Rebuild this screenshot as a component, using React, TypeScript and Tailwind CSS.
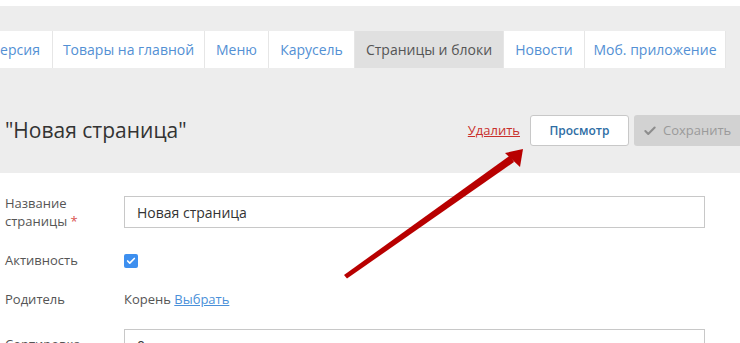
import { Check } from "lucide-react";

const tabs = [
  { name: "Версия", w: "w-[74px]" },
  { name: "Товары на главной", w: "w-[152px]" },
  { name: "Меню", w: "w-[64px]" },
  { name: "Карусель", w: "w-[86px]" },
  { name: "Страницы и блоки", w: "w-[149px]", active: true },
  { name: "Новости", w: "w-[81px]" },
  { name: "Моб. приложение", w: "w-[141px]" },
];

export default function App() {
  return (
    <div
      className="relative w-[740px] h-[343px] overflow-hidden bg-white text-[#333]"
      style={{ fontFamily: '"Open Sans", "Liberation Sans", sans-serif' }}
    >
      <div className="h-[6px] bg-white" />
      <div className="bg-[#ededed] h-[167px] pt-[25px]">
        <div className="flex ml-[-21px] h-[37px]">
          {tabs.map((t) => (
            <div
              key={t.name}
              className={`${t.w} shrink-0 flex items-center justify-center border-r border-[#e6e6e6] text-[14px] ${
                t.active ? "bg-[#e0e0e0] text-[#555]" : "bg-white text-[#5390d4]"
              }`}
            >
              {t.name}
            </div>
          ))}
        </div>

        <div className="flex items-center mt-[47px] h-[31px]">
          <h1 className="ml-[5px] text-[21px] text-[#333] flex-1">"Новая страница"</h1>
          <a className="text-[13px] text-[#c9302c] underline mr-[10px]">Удалить</a>
          <button className="w-[99px] h-[31px] bg-white border border-[#c8c8c8] rounded-[3px] text-[12px] font-semibold text-[#2e6da4] mr-[5px]">
            Просмотр
          </button>
          <button className="w-[108px] h-[31px] bg-[#d2d2d2] rounded-[3px] text-[13px] text-[#9a9a9a] flex items-center pl-[9px] gap-[6px] shrink-0 mr-[-2px]">
            <Check size={14} strokeWidth={3.5} className="text-[#8d8d8d]" />
            Сохранить
          </button>
        </div>
      </div>

      <div className="text-[13px] text-[#555]">
        <div className="flex mt-[23px] h-[32px]">
          <div className="w-[124px] pl-[5px] leading-[18px] -mt-[2px]">
            Название
            <br />
            страницы <span className="text-[#d9534f]">*</span>
          </div>
          <div className="w-[581px] h-[32px] border border-[#c8c8c8] flex items-center pl-[12px] text-[14px] text-[#333]">
            Новая страница
          </div>
        </div>

        <div className="flex items-center mt-[23px] h-[20px]">
          <div className="w-[124px] pl-[5px]">Активность</div>
          <div className="w-[14px] h-[14px] rounded-[2px] bg-[#3d8fef] flex items-center justify-center">
            <Check size={10} strokeWidth={4} className="text-white" />
          </div>
        </div>

        <div className="flex items-center mt-[19px] h-[20px]">
          <div className="w-[124px] pl-[5px]">Родитель</div>
          <div className="text-[#555]">
            Корень <a className="text-[#4a90d9] underline">Выбрать</a>
          </div>
        </div>

        <div className="flex mt-[19px] h-[32px]">
          <div className="w-[124px] pl-[5px] pt-[6px]">Сортировка</div>
          <div className="w-[581px] h-[32px] border border-[#c8c8c8] flex items-center pl-[12px] text-[14px] text-[#333]">
            0
          </div>
        </div>
      </div>

      <svg
        className="absolute left-0 top-0 pointer-events-none"
        width="740"
        height="343"
        viewBox="0 0 740 343"
      >
        <polygon points="344,275 347,278.5 514,162 510,155.5" fill="#b80000" />
        <polygon points="523,149 505,153 520,167" fill="#b80000" />
      </svg>
    </div>
  );
}
